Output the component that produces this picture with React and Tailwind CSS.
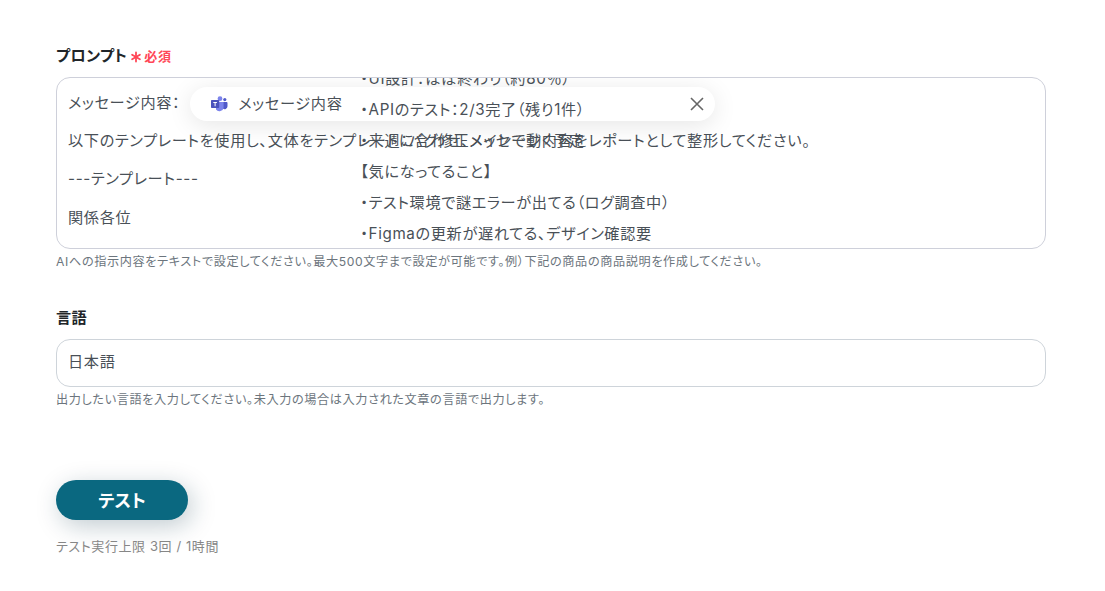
import { Asterisk } from 'lucide-react';

const PROMPT_LINES = [
  '以下のテンプレートを使用し、文体をテンプレートに合わせ、メッセージ内容をレポートとして整形してください。',
  '---テンプレート---',
  '関係各位',
];

const TOKEN_LINES = [
  '・UI設計：ほぼ終わり（約80％）',
  '・APIのテスト：2/3完了（残り1件）',
  '・来週：バグ修正メインで動く予定',
  '【気になってること】',
  '・テスト環境で謎エラーが出てる（ログ調査中）',
  '・Figmaの更新が遅れてる、デザイン確認要',
];

export default function App() {
  return (
    <main className="h-[591px] overflow-hidden bg-white px-14 pt-11 font-['Inter','Noto_Sans_CJK_JP',sans-serif] text-[15.2px] tracking-[0.65px] text-[#495057] [font-feature-settings:'palt']">
      <section>
        <Label text="プロンプト" required />
        <div className="mt-[9px] h-[172px] w-[990px] overflow-hidden rounded-[14px] border border-[#ced0da] px-[11px]">
          <div className="flex h-[51px] items-center">
            <span className="-mt-0.5 leading-6">メッセージ内容：</span>
            <MessageToken />
          </div>
          {PROMPT_LINES.map((line) => (
            <p key={line} className="h-[38.4px] whitespace-nowrap leading-[23px]">{line}</p>
          ))}
        </div>
        <Help>AIへの指示内容をテキストで設定してください。最大500文字まで設定が可能です。例）下記の商品の商品説明を作成してください。</Help>
      </section>

      <section className="mt-[35px]">
        <Label text="言語" />
        <input
          type="text"
          defaultValue="日本語"
          className="mt-[9px] block h-12 w-[990px] rounded-[14px] border border-[#ced4da] px-[11px] pb-1.5 tracking-[0.65px] outline-none"
        />
        <Help>出力したい言語を入力してください。未入力の場合は入力された文章の言語で出力します。</Help>
      </section>

      <button className="mt-[71px] block h-10 w-[132px] rounded-full bg-[#0a6880] pt-0.5 text-[17.6px] font-bold tracking-normal text-white shadow-[4px_6px_24px_rgba(10,50,70,0.25)]">
        テスト
      </button>
      <p className="mt-[18px] text-[13px] leading-[17px] tracking-[0.6px] text-[#868686]">テスト実行上限 3回 / 1時間</p>
    </main>
  );
}

function Label({ text, required }) {
  return (
    <div className="flex h-6 items-center pt-px font-bold text-[#212529]">
      <span className="tracking-[0.02em]">{text}</span>
      {required && (
        <span className="flex items-center text-[13px] text-[#ff4757]">
          <Asterisk size={18} strokeWidth={2.4} className="-mr-px" />
          必須
        </span>
      )}
    </div>
  );
}

function Help({ children }) {
  return <p className="mt-1 text-[12.16px] leading-[18px] tracking-[0.61px] text-[#6c757d]">{children}</p>;
}

function MessageToken() {
  return (
    <div className="relative ml-[10px] flex h-[34px] w-[525px] items-center rounded-full bg-white pl-5 pr-[11px] shadow-[0_4px_24px_rgba(0,0,0,0.1)]">
      <TeamsIcon />
      <span className="ml-[10px] leading-6">メッセージ内容</span>
      <svg width="14" height="14" viewBox="0 0 14 14" className="ml-auto" fill="none" stroke="#666" strokeWidth="1.6">
        <path d="M1 1l12 12M13 1L1 13" />
      </svg>
      <div className="absolute -top-[24px] left-[170px] whitespace-nowrap leading-[31px] tracking-[0.63px]">
        {TOKEN_LINES.map((line) => (
          <p key={line}>{line}</p>
        ))}
      </div>
    </div>
  );
}

function TeamsIcon() {
  return (
    <svg width="18" height="18" viewBox="0 0 18 18">
      <circle cx="14.8" cy="4.6" r="1.6" fill="#5059c9" />
      <path d="M12.5 7h4.1c.5 0 .9.4.9.9v3.4a2.8 2.8 0 0 1-4.8 2z" fill="#5059c9" />
      <circle cx="10" cy="3.7" r="2.4" fill="#7b83eb" />
      <path d="M6 7h7.6v5.4a4.2 4.2 0 0 1-7.6 2z" fill="#7b83eb" />
      <rect x="1" y="4.9" width="8.2" height="8.2" rx="0.8" fill="#4b53bc" />
      <path d="M3.3 7h3.6v.9H5.6v3.4h-1V7.9H3.3z" fill="#fff" />
    </svg>
  );
}
